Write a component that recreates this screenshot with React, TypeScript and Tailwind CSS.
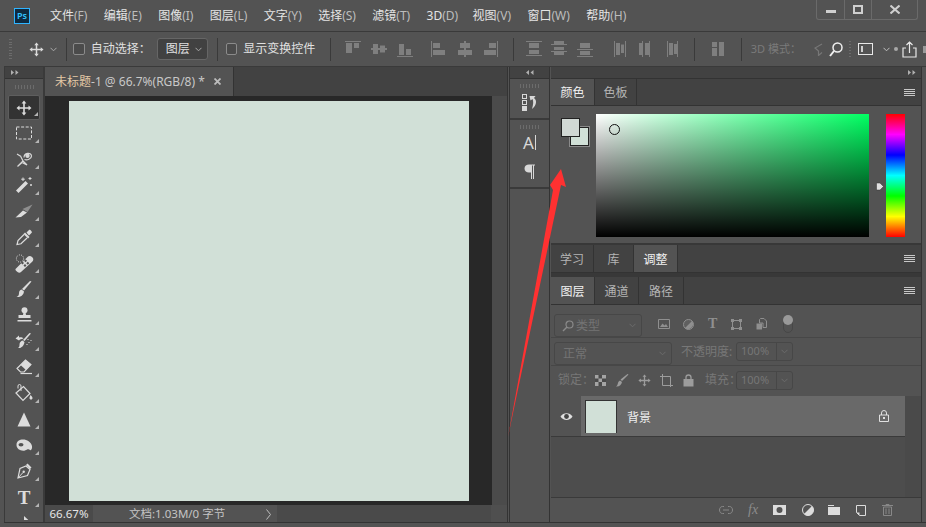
import React from "react";

function S({ w, h, vb, children, className = "" }: { w: number; h: number; vb?: string; children: React.ReactNode; className?: string }) {
  return (
    <svg width={w} height={h} viewBox={vb ?? `0 0 ${w} ${h}`} className={"shrink-0 block " + className}>
      {children}
    </svg>
  );
}

function MoveIcon({ c = "#dcdcdc", size = 16 }: { c?: string; size?: number }) {
  return (
    <S w={size} h={size} vb="0 0 16 16">
      <path d="M8 0.5 10.4 3.5H8.8V7.2H12.5V5.6L15.5 8 12.5 10.4V8.8H8.8V12.5H10.4L8 15.5 5.6 12.5H7.2V8.8H3.5V10.4L0.5 8 3.5 5.6V7.2H7.2V3.5H5.6Z" fill={c} />
    </S>
  );
}

function Chevron({ c = "#aaa" }: { c?: string }) {
  return (
    <S w={7} h={5}>
      <path d="M0.5 0.8 3.5 3.8 6.5 0.8" fill="none" stroke={c} strokeWidth="1" />
    </S>
  );
}

function Align({ d }: { d: string }) {
  return (
    <S w={16} h={16} vb="0 0 16 16">
      <path d={d} fill="#7f7f7f" />
    </S>
  );
}

const tools: React.ReactNode[] = [
  <MoveIcon key="m" />,
  <S w={16} h={14} key="mq"><rect x="0.5" y="1" width="15" height="12" fill="none" stroke="#dcdcdc" strokeDasharray="3 1.6" /></S>,
  <S w={17} h={17} key="lasso">
    <path d="M1 3 5 5.5M8 6.5C8 2 15 0.5 15.5 5 15.5 8 11 9.5 8.5 8.5M4.5 5 7 10 1.5 15.5M7 10 11 14 6 11.5 1.5 15.5" fill="none" stroke="#d8d8d8" strokeWidth="1.2" />
    <circle cx="11.5" cy="4.7" r="2.2" fill="#d8d8d8" />
  </S>,
  <S w={18} h={18} key="wand">
    <path d="M1 14.5 10.5 5 13 7.5 3.5 17Z" fill="#dcdcdc" />
    <path d="M8 1.5V5M6.2 3.2H9.8M15 1V4M13.5 2.5H16.5M16 8V10M15 9H17" stroke="#dcdcdc" strokeWidth="1" />
  </S>,
  <S w={18} h={14} key="slice">
    <path d="M0.5 13.5 8 6.5 12 8.5 6 13Z" fill="#dcdcdc" />
    <path d="M7.5 5 17.5 0.5 12.5 8Z" fill="#8e8e8e" />
  </S>,
  <S w={17} h={17} key="drop">
    <path d="M9 3.5 13.5 8 12 9.5 7.5 5Z" fill="#dcdcdc" />
    <path d="M10.5 3.5 13 1C14 0.2 16.5 2.8 15.7 3.8L13 6.5Z" fill="#dcdcdc" />
    <path d="M8 5.5 2 11.5 1 15.5 5 14.8 11 9" fill="none" stroke="#dcdcdc" strokeWidth="1.2" />
  </S>,
  <S w={19} h={19} key="heal">
    <path d="M1 14.5 12.5 3C13.7 1.7 15.5 1.5 17 3L17.5 3.5C18.7 5 18.5 6.5 17.2 7.7L6 18C5 19 3.5 18.8 2.5 18L1.3 17C0.2 16 0.2 15.3 1 14.5Z" fill="#dcdcdc" />
    <path d="M9 7.5 10.5 9 9 10.5 7.5 9ZM11.5 10 13 11.5 11.5 13 10 11.5ZM12 5.2 13.5 6.7 12 8.2 10.5 6.7ZM14.3 7.7 15.8 9.2 14.3 10.7 12.8 9.2Z" fill="#535353" transform="translate(-1.5 0)" />
    <circle cx="5" cy="4.5" r="3.6" fill="none" stroke="#dcdcdc" strokeDasharray="1 1.2" />
  </S>,
  <S w={17} h={17} key="brush">
    <path d="M15.5 0.5 8 9.5 6 8 14 0Z" fill="#dcdcdc" />
    <path d="M5.5 8.5 8 10.5C7.5 14.5 4 16.5 0.5 16 2.5 15 3 14 3 12 3 10 4 9 5.5 8.5Z" fill="#dcdcdc" />
  </S>,
  <S w={15} h={16} key="stamp">
    <circle cx="7.5" cy="3.2" r="3" fill="#dcdcdc" />
    <path d="M6.5 5H8.5L9 8H13.5V11H1.5V8H6Z" fill="#dcdcdc" />
    <rect x="0.5" y="13" width="14" height="1.5" fill="#dcdcdc" />
  </S>,
  <S w={18} h={16} key="hist">
    <path d="M16 0.5 9.5 8 8 7 14.5 0Z" fill="#dcdcdc" />
    <path d="M7.5 7.5 9.5 9C9 13 6 15.5 3 15 4.5 14 4.5 13 4.5 11.5 4.5 9.5 6 8 7.5 7.5Z" fill="#dcdcdc" />
    <path d="M0.5 5.5 4 2.5V4.5C6 4 7.5 4.5 8.5 5.5L5 6.5 4 7.5Z" fill="#dcdcdc" />
    <path d="M13 6V7M14 9V10M12 11V12M16 7V8" stroke="#dcdcdc" />
  </S>,
  <S w={17} h={16} key="eraser">
    <path d="M1 9.5 9.5 1 15 5.5 8 13H4.5Z" fill="none" stroke="#dcdcdc" strokeWidth="1.1" />
    <path d="M9.5 1 15 5.5 10 11 4.5 6Z" fill="#dcdcdc" />
    <path d="M4.5 14.5H16" stroke="#dcdcdc" strokeWidth="1.2" />
  </S>,
  <S w={18} h={18} key="bucket">
    <path d="M1 9 8.5 2.5 15 9.5 8 16.5Z" fill="none" stroke="#dcdcdc" strokeWidth="1.2" />
    <path d="M3 4.5V2A1.5 1.5 0 0 1 6 2V7" fill="none" stroke="#dcdcdc" strokeWidth="1" />
    <path d="M15.5 11C17 12.5 17.8 13.5 17.5 14.6 17 16 15 16 14.5 14.6 14.3 13.5 15 12.5 15.5 11Z" fill="#dcdcdc" />
  </S>,
  <S w={14} h={15} key="tri"><path d="M7 0.5 13.5 14.5H0.5Z" fill="#dcdcdc" /></S>,
  <S w={17} h={13} key="smudge">
    <path d="M0.5 6C0.5 2 3.5 0.5 7 0.5 11 0.5 15 3 16 7 16.5 9.5 15 12 14 11 12.5 9.5 11 10.5 9 11.5 5 12.5 0.5 10 0.5 6Z" fill="#dcdcdc" />
    <ellipse cx="5" cy="5.7" rx="2.5" ry="1.8" fill="#535353" />
  </S>,
  <S w={15} h={16} key="pen">
    <path d="M10.5 0.5 14.5 4.5 13 6 9 2Z" fill="#dcdcdc" />
    <path d="M9 3 13 6.5 10.5 12.5 1 15 3 5.5Z" fill="none" stroke="#dcdcdc" strokeWidth="1.2" />
    <path d="M1 15 6 9.5" stroke="#dcdcdc" />
    <circle cx="6.7" cy="8.7" r="1.2" fill="#dcdcdc" />
  </S>,
  <span key="t" className="font-['Liberation_Serif',serif] font-bold text-[19px] leading-none text-[#dcdcdc]">T</span>,
];

function Tool({ children, active, corner = true }: { children: React.ReactNode; active?: boolean; corner?: boolean }) {
  return (
    <div className={"relative flex w-[32px] shrink-0 items-center justify-center " + (active ? "h-[25px] rounded-[2px] border border-[#5e5e5e] bg-[#333333]" : "h-[26px]")}>
      {children}
      {corner && <span className="absolute right-[1px] bottom-[3px] h-0 w-0 border-l-[4px] border-b-[4px] border-l-transparent border-b-[#b5b5b5]" />}
    </div>
  );
}

function Grip({ w }: { w: number }) {
  return <div style={{ width: w }} className="h-[4px] bg-[repeating-linear-gradient(to_right,#6c6c6c_0,#6c6c6c_1px,transparent_1px,transparent_3px)]" />;
}

function Sep({ ml, mr }: { ml: number; mr: number }) {
  return <div style={{ marginLeft: ml, marginRight: mr }} className="h-[23px] w-px bg-[#3a3a3a] shrink-0" />;
}

function Tab({ children, active, w }: { children: React.ReactNode; active?: boolean; w: number }) {
  return (
    <div style={{ width: w }} className={"flex h-full items-center justify-center pt-[2px] text-[12px] border-r border-[#333333] " + (active ? "bg-[#535353] text-[#f2f2f2]" : "text-[#b4b4b4]")}>
      {children}
    </div>
  );
}

function Hamburger() {
  return (
    <div className="ml-auto mr-[6px] flex flex-col gap-[1px]">
      <div className="h-px w-[11px] bg-[#c8c8c8]" />
      <div className="h-px w-[11px] bg-[#c8c8c8]" />
      <div className="h-px w-[11px] bg-[#c8c8c8]" />
      <div className="h-px w-[11px] bg-[#c8c8c8]" />
    </div>
  );
}

function Menu({ a, b, tight }: { a: string; b: string; tight?: boolean }) {
  return (
    <div className={"text-[12px] text-[#e4e4e4] whitespace-nowrap " + (tight ? "mr-[-2px]" : "")}>
      {a}<span className="text-[#bdbdbd]">{b}</span>
    </div>
  );
}

function DimSelect({ w, h, children }: { w: number; h: number; children: React.ReactNode }) {
  return (
    <div style={{ width: w, height: h }} className="flex items-center rounded-[3px] border border-[#474747] pr-[5px] shrink-0">
      {children}
      <div className="ml-auto"><Chevron c="#6c6c6c" /></div>
    </div>
  );
}

function Pct() {
  return (
    <div className="flex h-[19px] w-[57px] items-center rounded-[3px] border border-[#474747] text-[11px] text-[#767676] shrink-0">
      <div className="flex h-full w-[40px] items-center pl-[4px] border-r border-[#474747]">100%</div>
      <div className="flex flex-1 justify-center"><Chevron c="#6c6c6c" /></div>
    </div>
  );
}

export default function App() {
  return (
    <div className="relative flex h-[527px] w-[926px] flex-col overflow-hidden bg-[#535353] font-['Noto_Sans','Noto_Sans_CJK_SC',sans-serif]">
      {/* title bar */}
      <div className="relative flex h-[32px] shrink-0 items-center border-b border-[#3a3a3a] bg-[#535353]">
        <div className="ml-[14px] flex h-[16px] w-[16px] items-center justify-center border border-[#2fb4ff] bg-[#0f2a3f] text-[9px] font-semibold leading-none text-[#31c5ff]">Ps</div>
        <div className="ml-[20px] flex items-center gap-[16.4px]">
          <Menu a="文件" b="(F)" />
          <Menu a="编辑" b="(E)" />
          <Menu a="图像" b="(I)" />
          <Menu a="图层" b="(L)" />
          <Menu a="文字" b="(Y)" />
          <Menu a="选择" b="(S)" />
          <Menu a="滤镜" b="(T)" />
          <Menu a="3D" b="(D)" tight />
          <Menu a="视图" b="(V)" />
          <Menu a="窗口" b="(W)" />
          <Menu a="帮助" b="(H)" />
        </div>
        <div className="absolute right-[8px] top-0 flex h-[20px] w-[102px] rounded-b-[3px] border border-t-0 border-[#6a6a6a]">
          <div className="flex w-[28px] items-center justify-center border-r border-[#6a6a6a] pt-[4px]"><div className="h-[3px] w-[10px] bg-[#cfcfcf]" /></div>
          <div className="flex w-[27px] items-center justify-center border-r border-[#6a6a6a]"><div className="h-[9px] w-[10px] border-2 border-[#cfcfcf]" /></div>
          <div className="flex flex-1 items-center justify-center">
            <S w={10} h={9}><path d="M0.5 0.5 9.5 8.5M9.5 0.5 0.5 8.5" stroke="#cfcfcf" strokeWidth="2" /></S>
          </div>
        </div>
      </div>

      {/* options bar */}
      <div className="ml-[4px] flex h-[35px] shrink-0 items-center border-b border-[#3a3a3a] text-[12px] text-[#e0e0e0]">
        <div className="ml-[5px] flex h-[20px] w-[3px] flex-col justify-between">
          {Array.from({ length: 8 }).map((_, i) => <div key={i} className="h-px w-[3px] bg-[#6c6c6c]" />)}
        </div>
        <div className="ml-[17px]"><MoveIcon size={15} /></div>
        <div className="ml-[6px]"><Chevron /></div>
        <Sep ml={9} mr={6} />
        <div className="h-[12px] w-[12px] rounded-[2px] border border-[#8b8b8b] bg-[#4b4b4b]" />
        <div className="ml-[6px] whitespace-nowrap">自动选择：</div>
        <div className="ml-[6px] flex h-[22px] w-[52px] items-center justify-between rounded-[3px] border border-[#666666] bg-[#414141] pl-[8px] pr-[5px]">
          <span>图层</span><Chevron />
        </div>
        <Sep ml={9} mr={8} />
        <div className="h-[12px] w-[12px] rounded-[2px] border border-[#8b8b8b] bg-[#4b4b4b]" />
        <div className="ml-[6px] whitespace-nowrap">显示变换控件</div>
        <Sep ml={15} mr={14} />
        <Align d="M0 0H16V1H0ZM1 2H7V12H1ZM9 2H14V7H9Z" />
        <div className="w-[10px]" />
        <Align d="M0 7H16V9H0ZM2 3H7V13H2ZM9 4.5H14V11.5H9Z" />
        <div className="w-[10px]" />
        <Align d="M0 15H16V16H0ZM2 3H7V14H2ZM9 8H14V14H9Z" />
        <div className="w-[19px]" />
        <Align d="M0 0H1V16H0ZM2 2H9V7H2ZM2 9H14V14H2Z" />
        <div className="w-[10px]" />
        <Align d="M7 0H9V16H7ZM3 2H13V7H3ZM1 9H15V14H1Z" />
        <div className="w-[9px]" />
        <Align d="M15 0H16V16H15ZM7 2H14V7H7ZM2 9H14V14H2Z" />
        <Sep ml={15} mr={12} />
        <Align d="M0 0H16V1H0ZM3 2H13V7H3ZM0 14H16V15H0ZM3 9H13V13H3Z" />
        <div className="w-[10px]" />
        <Align d="M0 3H16V4H0ZM3 0H13V3H3ZM0 10H16V11H0ZM3 6H13V9H3ZM3 11H13V14H3Z" />
        <div className="w-[10px]" />
        <Align d="M0 8H16V9H0ZM3 2H13V7H3ZM0 15H16V16H0ZM3 10H13V14H3Z" />
        <div className="w-[20px]" />
        <Align d="M2 0H3V16H2ZM4 2H8V14H4ZM13 0H14V16H13ZM9 3.5H12V12H9Z" />
        <div className="w-[10px]" />
        <Align d="M4 0H5V16H4ZM1 2H4V14H1ZM11 0H12V16H11ZM7 2H11V14H7Z" />
        <div className="w-[10px]" />
        <Align d="M3 0H4V16H3ZM5 2H9V14H5ZM13 0H14V16H13ZM10 3H13V13H10Z" />
        <Sep ml={14} mr={15} />
        <Align d="M2 1H7V6H2ZM9 1H14V15H9ZM2 7H7V15H2Z" />
        <Sep ml={15} mr={9} />
        <div className="w-[45px] whitespace-nowrap text-[11px] text-[#7a7a7a]">3D 模式：</div>
        <div className="ml-[18px]">
          <S w={9} h={13}><path d="M8 1 1 5 4.5 8V12.5L8 9.5" fill="none" stroke="#777" strokeWidth="1.2" /></S>
        </div>
        <div className="ml-[6px]">
          <S w={14} h={15}><circle cx="8.5" cy="5.5" r="4.5" fill="none" stroke="#f0f0f0" strokeWidth="1.5" /><path d="M5 9 1 14" stroke="#f0f0f0" strokeWidth="2" /></S>
        </div>
        <div className="ml-[6px] h-[17px] w-[2px] bg-[repeating-linear-gradient(to_bottom,#6c6c6c_0,#6c6c6c_1px,transparent_1px,transparent_3px)]" />
        <div className="ml-[7px] relative h-[12px] w-[16px] border border-[#e8e8e8]">
          <div className="absolute left-[2px] top-[2px] h-[6px] w-[2px] bg-[#cfcfcf]" />
        </div>
        <div className="ml-[10px]"><Chevron c="#c0c0c0" /></div>
        <div className="ml-[4px] h-[4px] w-[4px] rounded-full bg-[#a8a8a8]" />
        <div className="ml-[4px]">
          <S w={15} h={17}><path d="M4 7H1V16H14V7H11M7.5 12V1M4.5 4 7.5 1 10.5 4" fill="none" stroke="#e8e8e8" strokeWidth="1.2" /></S>
        </div>
        <div className="ml-[6px] h-[7px] w-[3px] bg-[#9a9a9a]" />
      </div>

      {/* workspace */}
      <div className="flex min-h-0 flex-1 border-b border-[#333333] mb-[4px] ml-[4px]">
        {/* tools */}
        <div className="flex w-[40px] shrink-0 flex-col border-x border-[#3a3a3a]">
          <div className="flex h-[12px] shrink-0 items-center border-b border-[#333333] bg-[#424242] pl-[6px]">
            <S w={8} h={5}><path d="M0 0 3 2.5 0 5ZM4.5 0 7.5 2.5 4.5 5Z" fill="#b0b0b0" /></S>
          </div>
          <div className="flex h-[16px] shrink-0 items-center justify-center"><Grip w={19} /></div>
          <div className="flex flex-col items-center overflow-hidden">
            {tools.map((t, i) => <Tool key={i} active={i === 0}>{t}</Tool>)}
            <div className="h-[10px] w-[32px] pl-[15px] pt-[6px]">
              <S w={8} h={10}><path d="M1 0V9L3 7 5 10 6.5 9.5 5 6.5H8Z" fill="#dcdcdc" /></S>
            </div>
          </div>
        </div>
        <div className="w-[1px] shrink-0 bg-[#3a3a3a]" />

        {/* document column */}
        <div className="flex w-[463px] shrink-0 flex-col border-r border-[#333333]">
          <div className="flex h-[29px] shrink-0 bg-[#424242]">
            <div className="flex h-full w-[189px] items-center border-r border-[#333333] bg-[#535353] pl-[10px] text-[12px] text-[#dcdcdc] whitespace-nowrap">
              <span className="text-[#e4c9a6]">未标题</span><span className="text-[#c8c8c8]">-1 @ 66.7%(RGB/8) *</span>
              <S w={7} h={7} className="ml-[9px]"><path d="M0.5 0.5 6.5 6.5M6.5 0.5 0.5 6.5" stroke="#bcbcbc" strokeWidth="1.8" /></S>
            </div>
          </div>
          <div className="flex min-h-0 flex-1">
            <div className="flex w-[447px] shrink-0 justify-start bg-[#282828] pl-[24px] pt-[5px]">
              <div className="h-[400px] w-[400px] bg-[#d1e0d7]" />
            </div>
            <div className="flex-1 bg-[#4b4b4b]" />
          </div>
          <div className="flex h-[17px] shrink-0 items-center bg-[#4a4a4a] leading-none">
            <div className="flex h-full w-[48px] items-center justify-center pt-[1px] text-[11.5px] text-[#e6e6e6]">66.67%</div>
            <div className="flex h-full w-[184px] items-center justify-between bg-[#535353] pl-[36px] pr-[6px] pt-[1px] text-[#c4c4c4]">
              <span className="text-[11.5px]">文档:1.03M/0 字节</span>
              <S w={5} h={11}><path d="M0.5 0.5 4.5 5.5 0.5 10.5" fill="none" stroke="#bdbdbd" strokeWidth="1" /></S>
            </div>
            <div className="flex-1" />
            <div className="h-full w-[16px] bg-[#4f4f4f]" />
          </div>
        </div>

        {/* narrow icon column */}
        <div className="ml-px flex w-[41px] shrink-0 flex-col border-x border-[#333333]">
          <div className="flex h-[12px] shrink-0 items-center justify-center border-b border-[#333333] bg-[#424242]">
            <S w={8} h={5}><path d="M3 0 0 2.5 3 5ZM7.5 0 4.5 2.5 7.5 5Z" fill="#b0b0b0" /></S>
          </div>
          <div className="flex h-[41px] shrink-0 flex-col items-center border-b-2 border-[#3a3a3a] pt-[5px]">
            <Grip w={19} />
            <div className="mt-[6px] flex items-center gap-[2px]">
              <div className="flex flex-col gap-[1px]">
                <div className="h-[5px] w-[5px] border border-[#d8d8d8]" />
                <div className="h-[5px] w-[5px] border border-[#d8d8d8]" />
                <div className="h-[5px] w-[5px] bg-[#d8d8d8]" />
              </div>
              <S w={8} h={15}><path d="M0.5 1H6.5L5 3C8 5 8 10 3 14 4.5 9 4.5 6 3.5 4L1.5 5.5Z" fill="#d8d8d8" /></S>
            </div>
          </div>
          <div className="flex h-[69px] shrink-0 flex-col items-center border-b-2 border-[#3a3a3a] pt-[5px]">
            <Grip w={19} />
            <div className="mt-[5px] flex h-[17px] items-center text-[17px] leading-none text-[#d8d8d8]">
              A<div className="ml-px h-[15px] w-px bg-[#d8d8d8]" />
            </div>
            <div className="mt-[13px]">
              <S w={11} h={15}><path d="M5 0.5H11V1.5H10V15H9V1.5H8V15H7V8.5H5C2.5 8.5 0.5 7 0.5 4.5S2.5 0.5 5 0.5Z" fill="#d8d8d8" /></S>
            </div>
          </div>
        </div>

        {/* right panels */}
        <div className="ml-[1px] flex min-w-0 flex-1 flex-col mr-[4px] border-r border-[#333333]">
          <div className="flex h-[12px] shrink-0 items-center justify-end border-b border-[#333333] bg-[#424242] pr-[5px]">
            <S w={8} h={5}><path d="M0 0 3 2.5 0 5ZM4.5 0 7.5 2.5 4.5 5Z" fill="#b0b0b0" /></S>
          </div>
          {/* color tabs */}
          <div className="flex h-[27px] shrink-0 items-center border-b border-[#333333] bg-[#424242]">
            <Tab active w={44}>颜色</Tab>
            <Tab w={42}>色板</Tab>
            <Hamburger />
          </div>
          {/* color body */}
          <div className="flex h-[137px] shrink-0 pt-[8px]">
            <div className="relative h-[32px] w-[45px] shrink-0">
              <div className="absolute left-[19px] top-[13px] h-[19px] w-[19px] border border-[#222222] bg-[#d1e0d7] outline outline-1 outline-[#8a8a8a]" />
              <div className="absolute left-[10px] top-[4px] h-[19px] w-[19px] border border-[#222222] bg-[#d1d8d4]" />
            </div>
            <div className="relative h-[123px] w-[273px] shrink-0 bg-[linear-gradient(to_top,#000000,transparent),linear-gradient(to_right,#ffffff,#00ff62)]">
              <div className="absolute left-[13px] top-[10px] h-[11px] w-[11px] rounded-full border border-[#111111]" />
            </div>
            <div className="relative ml-[17px] h-[123px] w-[19px] shrink-0 bg-[linear-gradient(to_bottom,#ff0000,#ff00ff,#0000ff,#00ffff,#00ff00,#ffff00,#ff0000)]">
              <S w={8} h={9} className="absolute left-[-10px] top-[68px]"><path d="M0.5 1H4L7.5 4.5 4 8H0.5Z" fill="#e0e0e0" stroke="#333" strokeWidth="0.5" /></S>
            </div>
          </div>
          <div className="h-[2px] shrink-0 bg-[#383838]" />
          {/* learn tabs */}
          <div className="flex h-[28px] shrink-0 items-center border-b border-[#333333] bg-[#424242]">
            <Tab w={43}>学习</Tab>
            <Tab w={40}>库</Tab>
            <Tab active w={44}>调整</Tab>
            <Hamburger />
          </div>
          <div className="h-[4px] shrink-0 bg-[#383838]" />
          {/* layers tabs */}
          <div className="flex h-[28px] shrink-0 items-center border-b border-[#333333] bg-[#424242]">
            <Tab active w={44}>图层</Tab>
            <Tab w={44}>通道</Tab>
            <Tab w={45}>路径</Tab>
            <Hamburger />
          </div>
          {/* filter */}
          <div className="flex h-[33px] shrink-0 items-center border-b border-[#474747] pl-[3px] pt-[9px]">
            <DimSelect w={88} h={23}>
              <div className="ml-[7px]">
                <S w={12} h={12}><circle cx="7.5" cy="4.5" r="3.5" fill="none" stroke="#8a8a8a" strokeWidth="1.2" /><path d="M5 7 1 11" stroke="#8a8a8a" strokeWidth="1.5" /></S>
              </div>
              <span className="ml-[2px] text-[12px] text-[#737373]">类型</span>
            </DimSelect>
            <div className="ml-[16px] mt-[-3px]">
              <S w={12} h={10}><path d="M0.5 0.5H11.5V9.5H0.5Z" fill="none" stroke="#8f8f8f" /><path d="M2 8 4.5 4.5 6.5 6.5 8 5 10 8Z" fill="#8f8f8f" /></S>
            </div>
            <div className="ml-[13px] mt-[-3px]">
              <S w={11} h={11}><circle cx="5.5" cy="5.5" r="5" fill="#5f5f5f" stroke="#8f8f8f" /><path d="M9 2 2 9A5 5 0 0 0 9 2Z" fill="#8f8f8f" /></S>
            </div>
            <div className="ml-[14px] mt-[-3px] w-[10px] font-['Liberation_Serif',serif] text-[14px] font-bold leading-none text-[#8f8f8f]">T</div>
            <div className="ml-[13px] mt-[-3px]">
              <S w={11} h={11}><path d="M1.5 1.5H9.5V9.5H1.5Z" fill="none" stroke="#8f8f8f" /><path d="M0 0H3V3H0ZM8 0H11V3H8ZM0 8H3V11H0ZM8 8H11V11H8Z" fill="#8f8f8f" /></S>
            </div>
            <div className="ml-[14px] mt-[-3px]">
              <S w={11} h={12}><path d="M4.5 0.5H8L10.5 3V9.5H7V5H3.5V1.5Z" fill="none" stroke="#8f8f8f" /><path d="M0.5 5.5H6V11.5H0.5Z" fill="#8f8f8f" /></S>
            </div>
            <div className="relative ml-[16px] mt-[-3px] h-[18px] w-[10px] rounded-full border border-[#474747]">
              <div className="absolute left-[-1px] top-[-1px] h-[10px] w-[10px] rounded-full bg-[#999999]" />
            </div>
          </div>
          {/* mode */}
          <div className="flex h-[28px] shrink-0 items-start border-b border-[#474747] pl-[3px] pt-[4px] text-[12px]">
            <DimSelect w={118} h={23}>
              <span className="ml-[8px] text-[#737373]">正常</span>
            </DimSelect>
            <span className="ml-[9px] w-[55px] whitespace-nowrap leading-[19px] text-[#777777]">不透明度:</span>
            <Pct />
          </div>
          {/* lock */}
          <div className="flex h-[30px] shrink-0 items-center pb-[2px] text-[12px] text-[#777777]">
            <span className="ml-[7px] w-[37px] whitespace-nowrap">锁定：</span>
            <S w={11} h={11}><rect width="11" height="11" fill="#4a4a4a" /><path d="M0 0H3.5V3.5H0ZM7 0H11V3.5H7ZM3.5 3.5H7V7H3.5ZM0 7H3.5V11H0ZM7 7H11V11H7Z" fill="#a4a4a4" /></S>
            <div className="ml-[10px]"><S w={13} h={13}><path d="M12.5 0.5 6 7 4.5 5.5 11.5 0ZM4 6.5 6 8C5.5 11 3 13 0 12.5 1.5 11.5 1.5 10.5 2 9 2.2 8 3 7 4 6.5Z" fill="#9c9c9c" /></S></div>
            <div className="ml-[9px]"><MoveIcon c="#9c9c9c" size={13} /></div>
            <div className="ml-[9px]"><S w={13} h={13}><path d="M2.5 0V11.5H13M0 2.5H10.5V13" fill="none" stroke="#9c9c9c" /></S></div>
            <div className="ml-[10px]"><S w={11} h={13}><path d="M3 5V3.5A2.5 2.5 0 0 1 8 3.5V5" fill="none" stroke="#9c9c9c" strokeWidth="1.3" /><path d="M0.5 5H10.5V12.5H0.5Z" fill="#9c9c9c" /></S></div>
            <span className="ml-[11px] w-[31px] whitespace-nowrap">填充：</span>
            <Pct />
          </div>
          {/* layer row */}
          <div className="flex h-[101px] shrink-0 bg-[#4d4d4d]">
            <div className="flex h-[41px] w-[30px] shrink-0 items-center justify-center border-b border-[#3a3a3a] bg-[#535353]">
              <S w={13} h={9}><path d="M0.5 4.5C3 0 10 0 12.5 4.5 10 9 3 9 0.5 4.5Z" fill="#e0e0e0" /><circle cx="6.5" cy="4.5" r="2.4" fill="#444" /></S>
            </div>
            <div className="flex h-[41px] w-[324px] shrink-0 items-center border-b border-[#3a3a3a] bg-[#696969] pl-[4px] pr-[16px]">
              <div className="h-[33px] w-[32px] border-x border-t border-[#333333] bg-[#d1e0d7]" />
              <span className="ml-[10px] pt-[4px] text-[12px] text-[#f0f0f0]">背景</span>
              <div className="ml-auto">
                <S w={10} h={12}><path d="M2.5 5V3A2.5 2.5 0 0 1 7.5 3V5" fill="none" stroke="#e0e0e0" /><path d="M0.5 5H9.5V11.5H0.5Z" fill="none" stroke="#e0e0e0" /><rect x="4" y="7" width="2" height="2" fill="#e0e0e0" /></S>
              </div>
            </div>
            <div className="flex-1 bg-[#4a4a4a]" />
          </div>
          {/* footer */}
          <div className="flex min-h-0 flex-1 items-center border-t border-[#3a3a3a] pl-[168px]">
            <S w={14} h={8}><path d="M5 0.5H3.5C-0.5 0.5-0.5 7.5 3.5 7.5H5M9 0.5H10.5C14.5 0.5 14.5 7.5 10.5 7.5H9M4 4H10" fill="none" stroke="#888" /></S>
            <span className="ml-[15px] w-[12px] font-['Liberation_Serif',serif] text-[14px] italic leading-none text-[#8c8c8c]">fx</span>
            <div className="ml-[13px]"><S w={13} h={10}><path fillRule="evenodd" d="M0 0H13V10H0ZM6.5 2A3 3 0 1 0 6.5 8 3 3 0 1 0 6.5 2Z" fill="#dcdcdc" /></S></div>
            <div className="ml-[16px]"><S w={12} h={12}><circle cx="6" cy="6" r="5.5" fill="#535353" stroke="#dcdcdc" /><path d="M10 2 2 10A5.5 5.5 0 0 0 10 2Z" fill="#dcdcdc" /></S></div>
            <div className="ml-[14px]"><S w={12} h={10}><path d="M0 0H6V1H0ZM0 2H12V10H0Z" fill="#dcdcdc" /></S></div>
            <div className="ml-[16px]"><S w={10} h={11}><path d="M0.5 0.5H9.5V10.5H3.5L0.5 7.5Z" fill="none" stroke="#dcdcdc" /><path d="M0.5 7.5H3.5V10.5Z" fill="#dcdcdc" /></S></div>
            <div className="ml-[16px]"><S w={11} h={12}><path d="M0 1.5H11M4 1.5V0.5H7V1.5M1.5 3H9.5V11.5H1.5ZM4 4.5V10M7 4.5V10" fill="none" stroke="#888" /></S></div>
          </div>
        </div>
      </div>

      {/* red annotation arrow */}
      <svg width="926" height="527" className="absolute inset-0 pointer-events-none">
        <polygon points="561,169 566,187 561,185 508,437 553,190 550,185" fill="#ff3131" />
      </svg>
    </div>
  );
}
